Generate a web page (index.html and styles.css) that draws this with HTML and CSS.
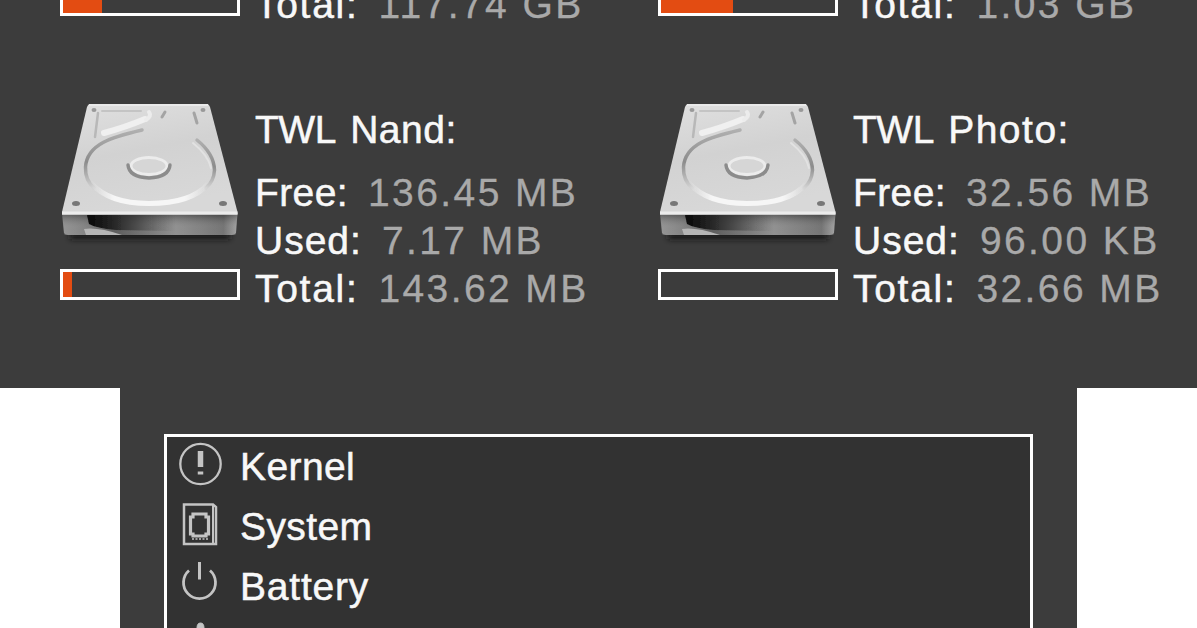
FILE: index.html
```
<!DOCTYPE html>
<html>
  <head>
    <meta charset="utf-8">
    <title>System info</title>
    <link rel="stylesheet" href="styles.css">
  </head>
  <body>
    <svg width="0" height="0" class="defs">
      <defs>
        <linearGradient id="face" x1="0" y1="0" x2="0.3" y2="1">
          <stop offset="0" stop-color="#e0e0e0"/>
          <stop offset="0.5" stop-color="#d2d2d2"/>
          <stop offset="1" stop-color="#d8d8d8"/>
        </linearGradient>
        <linearGradient id="front" x1="0" y1="0" x2="1" y2="0">
          <stop offset="0" stop-color="#8a8a8a"/>
          <stop offset="0.13" stop-color="#777"/>
          <stop offset="0.3" stop-color="#4c4c4c"/>
          <stop offset="0.65" stop-color="#858585"/>
          <stop offset="0.92" stop-color="#666"/>
          <stop offset="1" stop-color="#999"/>
        </linearGradient>
        <linearGradient id="shade" x1="0" y1="0" x2="0" y2="1">
          <stop offset="0" stop-color="#000" stop-opacity="0.25"/>
          <stop offset="0.6" stop-color="#fff" stop-opacity="0.1"/>
          <stop offset="1" stop-color="#fff" stop-opacity="0.1"/>
        </linearGradient>
        <linearGradient id="slot" x1="0" y1="0" x2="1" y2="0">
          <stop offset="0" stop-color="#080808"/>
          <stop offset="0.3" stop-color="#262626"/>
          <stop offset="1" stop-color="#555" stop-opacity="0"/>
        </linearGradient>
        <linearGradient id="groove" x1="0" y1="0" x2="0" y2="1">
          <stop offset="0" stop-color="#b0b0b0"/>
          <stop offset="0.55" stop-color="#8c8c8c"/>
          <stop offset="1" stop-color="#d2d2d2"/>
        </linearGradient>
        <linearGradient id="rim" x1="0" y1="0" x2="1" y2="0">
          <stop offset="0" stop-color="#f6f6f6" stop-opacity="0"/>
          <stop offset="0.2" stop-color="#f6f6f6"/>
          <stop offset="0.8" stop-color="#f6f6f6"/>
          <stop offset="1" stop-color="#f6f6f6" stop-opacity="0"/>
        </linearGradient>
        <filter id="soft"><feGaussianBlur stdDeviation="0.7"/></filter>
        <filter id="shadow" x="-10%" y="-150%" width="120%" height="400%"><feGaussianBlur stdDeviation="3"/></filter>
        <symbol id="hdd" viewBox="60 98 180 150">
          <rect x="70" y="230" width="160" height="9" fill="#181818" filter="url(#shadow)"/>
          <path d="M62 213H237.500L236 233Q235 235 232 235H68Q65 235 64 233Z" fill="url(#front)"/>
          <path d="M62 215H237L236 235H64Z" fill="url(#shade)"/>
          <g filter="url(#soft)">
            <path d="M87 215H175V231L116 230Q96 228 89 224Z" fill="url(#slot)"/>
            <path d="M84 229Q98 227 122 235H86Z" fill="#b5b5b5"/>
          </g>
          <path d="M90 104H207Q209 104 210 107L237.500 212V214.500H62V212L87 107Q88 104 90 104Z" fill="url(#face)"/>
          <path d="M62 213H237.500" stroke="#ececec" stroke-width="3"/>
          <path d="M89 105H208" stroke="#e9e9e9" stroke-width="2"/>
          <g fill="none" stroke-linecap="round" filter="url(#soft)">
            <path d="M98 113L95 137" stroke="#b8b8b8" stroke-width="2.500"/>
            <path d="M102 111H141" stroke="#c4c4c4" stroke-width="2"/>
            <path d="M104 133Q126 127 145 119" stroke="#f0f0f0" stroke-width="6"/>
            <path d="M146 120Q152 116 149 112" stroke="#ececec" stroke-width="4"/>
            <path d="M142 130C112 137 87 144 85.500 167Q85 180 94 188" stroke="url(#groove)" stroke-width="3.500"/>
            <path d="M197 140C207 148 214 157 214.500 170Q214 181 206 188" stroke="url(#groove)" stroke-width="3.500"/>
            <path d="M193 143Q208 155 211 168" stroke="#e2e2e2" stroke-width="2"/>
            <path d="M91 183C104 198 124 203.500 149 203.500C176 203.500 196 198 208 184" stroke="url(#rim)" stroke-width="5"/>
            <path d="M162 117L165 112M194 113L197 123" stroke="#a4a4a4" stroke-width="3"/>
            <ellipse cx="149" cy="166" rx="18" ry="8.500" fill="#d6d6d6" stroke="#ececec" stroke-width="3"/>
            <path d="M128 165Q129 177 149 178Q169 177 170 165" stroke="#8c8c8c" stroke-width="3.400"/>
          </g>
          <g fill="#777" filter="url(#soft)">
            <ellipse cx="76" cy="203.500" rx="4" ry="2.500"/>
            <ellipse cx="223" cy="203.500" rx="4" ry="2.500"/>
            <ellipse cx="94" cy="110" rx="2.500" ry="2" fill="#999"/>
            <ellipse cx="203" cy="110" rx="2.500" ry="2" fill="#999"/>
          </g>
        </symbol>
      </defs>
    </svg>

    <div class="drives">
      <div class="drive">
        <div class="disk">
          <div class="bar"><div class="fill" style="width: 39px"></div></div>
        </div>
        <div class="info">
          <p><span class="label total">Total:</span><span class="value">117.74 GB</span></p>
        </div>
      </div>
      <div class="drive">
        <div class="disk">
          <div class="bar"><div class="fill" style="width: 72px"></div></div>
        </div>
        <div class="info">
          <p><span class="label total">Total:</span><span class="value">1.03 GB</span></p>
        </div>
      </div>
      <div class="drive">
        <div class="disk">
          <svg class="hdd"><use href="#hdd"/></svg>
          <div class="bar"><div class="fill" style="width: 9px"></div></div>
        </div>
        <div class="info">
          <h2 class="nand"><span class="twl">TWL</span> Nand:</h2>
          <p><span class="label free">Free:</span><span class="value">136.45 MB</span></p>
          <p><span class="label">Used:</span><span class="value">7.17 MB</span></p>
          <p><span class="label total">Total:</span><span class="value">143.62 MB</span></p>
        </div>
      </div>
      <div class="drive">
        <div class="disk">
          <svg class="hdd"><use href="#hdd"/></svg>
          <div class="bar"></div>
        </div>
        <div class="info">
          <h2><span class="twl">TWL</span> Photo:</h2>
          <p><span class="label free">Free:</span><span class="value">32.56 MB</span></p>
          <p><span class="label">Used:</span><span class="value">96.00 KB</span></p>
          <p><span class="label total">Total:</span><span class="value">32.66 MB</span></p>
        </div>
      </div>
    </div>

    <div class="bottom">
      <ul class="menu">
        <li>
          <svg class="icon" viewBox="0 0 44 60">
            <circle cx="21.500" cy="27" r="20.200" stroke-width="2.300"/>
            <path d="M21.500 14V30" stroke-width="5.500"/>
            <path d="M21.500 34.500V37.500" stroke-width="5.500"/>
          </svg>
          Kernel
        </li>
        <li>
          <svg class="icon" viewBox="0 0 44 60">
            <path d="M5 7.500H34L37 10V47H5Z" stroke-width="2.500"/>
            <path d="M34 8V47" stroke-width="2"/>
            <path d="M14 17H27V20H29.500V37H27V39H14V37H11.500V20H14Z" stroke-width="3.200"/>
            <path d="M13 42H29" stroke-width="1.500" stroke-dasharray="2 1.500"/>
          </svg>
          System
        </li>
        <li>
          <svg class="icon" viewBox="0 0 44 60">
            <path d="M10 13.500A16 16 0 1 0 31 13.500" stroke-width="2.800"/>
            <path d="M20.500 5V22.500" stroke-width="3"/>
          </svg>
          <span class="battery">Battery</span>
        </li>
        <li>
          <svg class="icon" viewBox="0 0 44 60">
            <path d="M18 11Q18 6 21.500 6T25 11Z" fill="#c4c4c4" stroke-width="1"/>
          </svg>
        </li>
      </ul>
    </div>
  </body>
</html>
```

FILE: styles.css
```
body { margin: 0; height: 628px; overflow: hidden; background: #fff; color: #f8f8f8; font-family: "Liberation Sans", Arial, sans-serif; font-size: 39px; line-height: 48px; -webkit-text-stroke: 0.5px; }
h2, p { margin: 0; font-size: 39px; font-weight: normal; white-space: nowrap; }

.defs { display: block; }

.drives { box-sizing: border-box; height: 388px; padding: 0 0 75px 60px; overflow: hidden; background: #3c3c3c; display: grid; grid-template-columns: 598px 539px; grid-template-rows: 284px 284px; align-content: end; }
.drive { display: flex; align-items: flex-end; }
.disk { width: 180px; padding-bottom: 13px; margin-right: 15px; }
.hdd { display: block; width: 180px; height: 150px; margin-bottom: 21px; }
.bar { box-sizing: border-box; width: 180px; height: 31px; border: 3px solid #fff; }
.fill { height: 100%; background: #e34c12; }

.info h2 { margin-bottom: 15px; letter-spacing: 1.5px; word-spacing: 2px; }
.info .nand { letter-spacing: 0.5px; word-spacing: 3px; }
.info p { display: flex; gap: 20px; }
.info .twl { letter-spacing: -0.5px; }
.label { letter-spacing: 1px; }
.free { letter-spacing: 0.4px; }
.total { letter-spacing: 1.7px; }
.value { color: #a9a9a9; letter-spacing: 2.4px; -webkit-text-stroke: 0.3px; }

.bottom { box-sizing: border-box; width: 957px; height: 240px; margin-left: 120px; padding: 46px 44px 0; background: #3c3c3c; overflow: hidden; }
.menu { box-sizing: border-box; height: 260px; margin: 0; padding: 0 0 0 12px; list-style: none; background: #323232; border: 3px solid #fff; }
.menu li { display: flex; height: 60px; line-height: 60px; letter-spacing: 0.4px; }
.battery { letter-spacing: 0.8px; }
.icon { width: 44px; height: 60px; margin-right: 17px; fill: none; stroke: #c4c4c4; }
```
